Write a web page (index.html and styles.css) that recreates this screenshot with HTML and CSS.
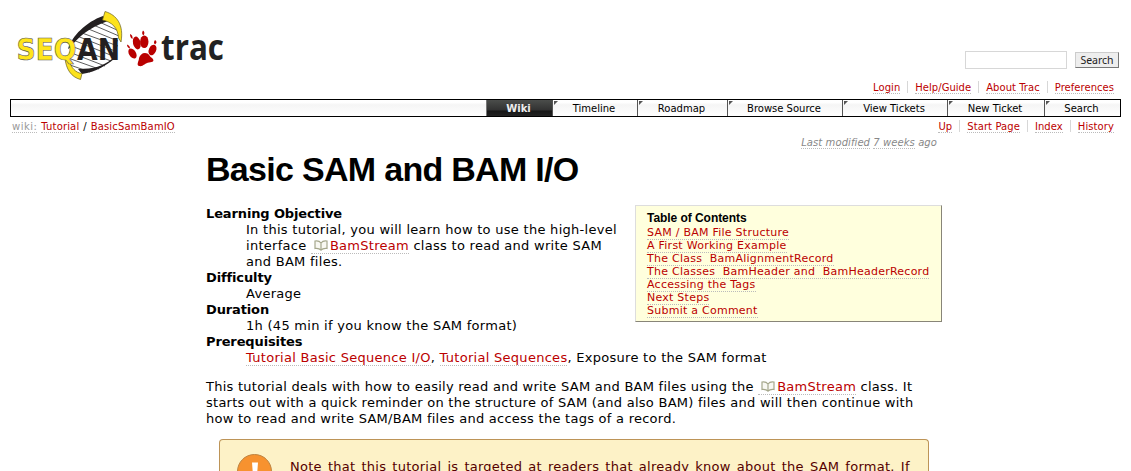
FILE: index.html
```html
<!DOCTYPE html>
<html lang="en">
<head>
<meta charset="utf-8">
<title>Basic SAM and BAM I/O</title>
<link rel="stylesheet" href="styles.css">
</head>
<body>
<header class="banner">
  <svg class="logo" width="230" height="80" viewBox="0 0 230 80" role="img" aria-label="SeqAn trac">
    <path class="helix-fill" d="M104 18C82 23 69 38 67 56Q68 68 80 73C104 68 116 52 120 34Q117 20 104 18Z"/>
    <path class="rungs" d="M97 21l20 9M91 24l28 12M86 28l32 13M82 33l36 13M77 36l38 15M73 40l40 16M71 46l40 15M69 52l36 14M68 58l31 11M70 65l20 7"/>
    <path class="strand" d="M103 16C86 22 72 36 68 49L71 47C77 38 88 28 108 21ZM112 59C103 66 94 69 78 69L82 74C96 72 107 65 114 59Z"/>
    <path class="ribbon" d="M105 11.500C117 15 124 25 121 42L118.500 38C118 28 112 22 102.500 20Z"/>
    <path class="ribbon" d="M65 58C66 69 71 77 80.500 79.500L82 73.500C76 73 71 68 69 60Z"/>
    <text class="logo-seq" x="16.500" y="60.300" textLength="60" lengthAdjust="spacingAndGlyphs">SEQ</text>
    <text class="logo-an" x="77" y="60" textLength="43" lengthAdjust="spacingAndGlyphs">AN</text>
    <g class="paw">
      <path d="M145 53C149 53 149 56 152 58C155 61 153 62 149 62.500C145 63 143 67 139 66C136 65 139 61 139 58C140 55 142 53 145 53Z"/>
      <ellipse cx="136.800" cy="43" rx="3.800" ry="6.500" transform="rotate(-14 136.800 43)"/>
      <ellipse cx="144.300" cy="41.800" rx="4.200" ry="6.300"/>
      <ellipse cx="152.500" cy="50" rx="3.600" ry="5.600" transform="rotate(24 152.500 50)"/>
      <ellipse cx="132.500" cy="53.500" rx="3.500" ry="5.500" transform="rotate(-32 132.500 53.500)"/>
      <path d="M130 34q3 1 2.500 5q-2.500-1-2.500-5M143 30.500q2.500 2 .5 5q-2.500-2-.5-5M155 40q3 2 0 4.500q-2-2 0-4.500M127 44.500q3 1 3 4q-3-1-3-4"/>
    </g>
    <text class="logo-trac" x="161" y="60" textLength="63" lengthAdjust="spacingAndGlyphs">trac</text>
  </svg>
  <form class="search">
    <input class="search-input" type="text" aria-label="Search"><button class="search-button" type="button">Search</button>
  </form>
</header>
<nav class="meta"><a>Login</a><a>Help/Guide</a><a>About Trac</a><a>Preferences</a></nav>
<nav class="mainnav">
  <a class="tab tab-wiki active">Wiki</a><a class="tab tab-timeline">Timeline</a><a class="tab tab-roadmap">Roadmap</a><a class="tab tab-browse">Browse Source</a><a class="tab tab-view">View Tickets</a><a class="tab tab-new">New Ticket</a><a class="tab tab-search">Search</a>
</nav>
<div class="context">
  <div class="path"><a class="root">wiki:</a> <a>Tutorial</a> / <a>BasicSamBamIO</a></div>
  <nav class="meta ctx"><a>Up</a><a>Start Page</a><a>Index</a><a>History</a></nav>
</div>
<main class="page">
  <div class="modified"><a>Last modified</a> <a>7 weeks</a> ago</div>
  <h1>Basic SAM and BAM I/O</h1>
  <div class="intro">
    <dl>
      <dt>Learning Objective</dt>
      <dd>In this tutorial, you will learn how to use the high-level<br>interface <a class="doc"><svg class="book" width="14" height="11" viewBox="0 0 14 11"><path d="M7 3C5.500 1 3.500 .5 1 1V8.500C3.500 8.200 5.500 8.500 7 10.200C8.500 8.500 10.500 8.200 13 8.500V1C10.500 .5 8.500 1 7 3V10"/></svg>BamStream</a> class to read and write SAM<br>and BAM files.</dd>
      <dt>Difficulty</dt>
      <dd>Average</dd>
      <dt>Duration</dt>
      <dd>1h (45 min if you know the SAM format)</dd>
      <dt>Prerequisites</dt>
      <dd><a>Tutorial Basic Sequence I/O</a>, <a>Tutorial Sequences</a>, Exposure to the SAM format</dd>
    </dl>
    <aside class="toc">
      <h4>Table of Contents</h4>
      <ol>
        <li><a>SAM / BAM File Structure</a></li>
        <li><a>A First Working Example</a></li>
        <li><a>The Class &nbsp;BamAlignmentRecord</a></li>
        <li><a>The Classes &nbsp;BamHeader and &nbsp;BamHeaderRecord</a></li>
        <li><a>Accessing the Tags</a></li>
        <li><a>Next Steps</a></li>
        <li><a>Submit a Comment</a></li>
      </ol>
    </aside>
  </div>
  <p class="lead">This tutorial deals with how to easily read and write SAM and BAM files using the <a class="doc"><svg class="book" width="14" height="11" viewBox="0 0 14 11"><path d="M7 3C5.500 1 3.500 .5 1 1V8.500C3.500 8.200 5.500 8.500 7 10.200C8.500 8.500 10.500 8.200 13 8.500V1C10.500 .5 8.500 1 7 3V10"/></svg>BamStream</a> class. It<br>starts out with a quick reminder on the structure of SAM (and also BAM) files and will then continue with<br>how to read and write SAM/BAM files and access the tags of a record.</p>
  <section class="note">
    <svg class="warn" width="36" height="36" viewBox="0 0 36 36"><circle cx="17.500" cy="17.500" r="17"/><path d="M15 8.500h6l-1 13h-4zM15.500 25h5v4h-5z"/></svg>
    <p>Note that this tutorial is targeted at readers that already know about the SAM format. If</p>
  </section>
</main>
</body>
</html>
```

FILE: styles.css
```css
* { box-sizing: border-box; }
body { margin: 0; background: #fff; color: #000; font: 13px/16px Verdana, "DejaVu Sans", sans-serif; }
a { color: #b00; border-bottom: 1px dotted #bbb; white-space: nowrap; }
.banner { display: flex; justify-content: space-between; height: 80px; padding-right: 12px; }
.logo { display: block; }
.helix-fill { fill: #fff; }
.rungs { stroke: #333; stroke-width: .8; fill: none; }
.strand { fill: #231f20; }
.ribbon { fill: #fce21c; stroke: #665e20; stroke-width: .7; }
.logo-seq, .logo-an { font: bold 30px "DejaVu Sans", sans-serif; }
.logo-seq { fill: #ffe51c; stroke: #555; stroke-width: .6; }
.logo-an { fill: #231f20; }
.paw { fill: #b90000; }
.logo-trac { font: bold 35px "Open Sans", sans-serif; fill: #222; }
.search { display: flex; align-items: flex-start; gap: 8px; padding-top: 51px; }
.search-input { width: 102px; height: 18px; border: 1px solid #d7d7d7; padding: 0; }
.search-button { width: 44px; height: 16px; margin-top: 1px; padding: 0; background: #eee; color: #222; border: 1px solid #ccc; border-right-color: #777; border-bottom-color: #777; font: 10.500px/12px "Noto Sans", sans-serif; }
.meta { display: flex; justify-content: flex-end; padding: 2px 17px 0 0; font-size: 10px; line-height: 12px; height: 19px; letter-spacing: .04px; }
.meta a { height: 12px; }
.meta a + a { margin-left: 15px; position: relative; }
.meta a + a::before { content: ""; position: absolute; left: -8px; top: -1px; width: 1px; height: 12px; background: #d7d7d7; }
.mainnav { display: flex; justify-content: flex-end; height: 18px; margin: 0 10px; border: 1px solid #000; background: linear-gradient(#fff 15%, #f5f5f5 30%, #fff); }
.tab { position: relative; border: 0; border-left: 1px solid #555; color: #000; font-size: 10px; line-height: 18px; text-align: center; padding-right: 2px; }
.tab::before { content: ""; position: absolute; left: 1px; top: 1px; border-top: 4px solid #555; border-right: 4px solid transparent; }
.tab.active { background: linear-gradient(#4b4d4b, #333 60%, #171717 70%, #222); color: #eee; font-weight: bold; border-left-color: #777; }
.tab.active::before { display: none; }
.tab-wiki { width: 66px; }
.tab-timeline { width: 85px; }
.tab-roadmap { width: 90px; }
.tab-browse { width: 115px; }
.tab-view { width: 105px; }
.tab-new { width: 97px; }
.tab-search { width: 76px; }
.context { display: flex; justify-content: space-between; height: 19px; padding-left: 12px; }
.path { padding-top: 4px; font-size: 10px; line-height: 12px; letter-spacing: .15px; word-spacing: .6px; }
.path .root { color: #999; letter-spacing: .5px; }
.meta.ctx { padding-top: 4px; letter-spacing: .08px; }
.page { width: 736px; margin-left: 206px; }
.modified { height: 14px; margin-right: 5px; font-size: 10px; line-height: 13px; font-style: italic; text-align: right; color: #888; letter-spacing: .08px; }
.modified a { color: #888; }
h1 { margin: 0; height: 55px; font: bold 34px/39px Arial, "Liberation Sans", sans-serif; letter-spacing: -.7px; }
.intro { display: flex; justify-content: space-between; height: 161px; }
dl { margin: 0; padding-top: 1px; width: 429px; white-space: nowrap; }
dt { font-weight: bold; letter-spacing: -.13px; }
dd { margin: 0 0 0 40px; letter-spacing: .28px; }
.book { margin: 0 2px 0 3px; vertical-align: -1px; fill: #f8f8f2; stroke: #a5a78c; stroke-width: 1.2; }
.toc { width: 307px; height: 117px; padding: 5px 0 0 11px; background: #ffd; border: 1px solid; border-color: #ddd #888578 #888578 #ddd; }
.toc h4 { margin: 0; font: bold 12px/14px Arial, "Liberation Sans", sans-serif; letter-spacing: -.05px; }
.toc ol { margin: 1px 0 0; padding: 0; list-style: none; font-size: 11px; line-height: 13px; letter-spacing: .25px; white-space: nowrap; }
.lead { margin: 13px 0 0; letter-spacing: .26px; white-space: nowrap; }
.note { display: flex; width: 710px; height: 32px; margin: 12px 0 0 13px; padding: 14px 0 0 17px; gap: 17px; overflow: hidden; border: 1px solid #bd9457; border-bottom: 0; border-radius: 4px 4px 0 0; background: #fdf2c7; color: #500; white-space: nowrap; }
.note p { margin: 5px 0 0; letter-spacing: .26px; word-spacing: 1.7px; }
.warn { flex: none; }
.warn circle { fill: #f7922f; stroke: #bd8441; }
.warn path { fill: #fff; }
```
